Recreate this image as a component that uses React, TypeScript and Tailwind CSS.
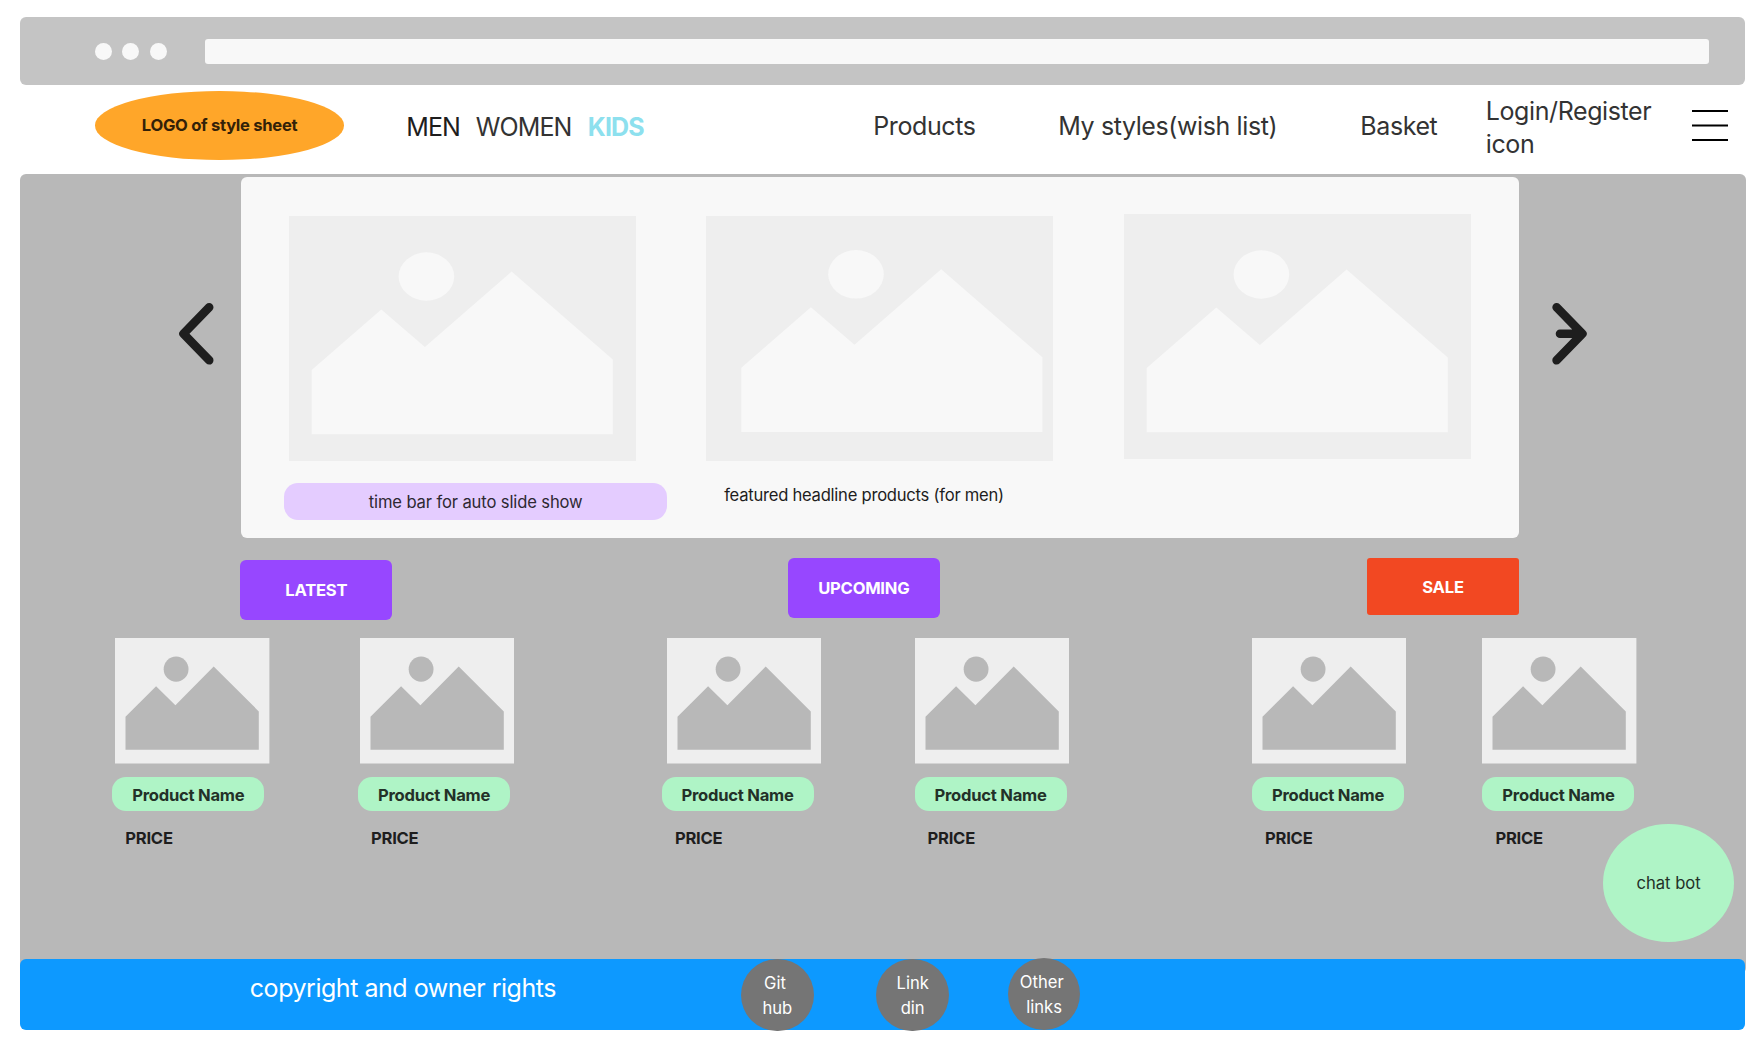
type PictureProps = { className: string; dx?: number; dy?: number };

function HeroPicture({ className, dx = 0, dy = 0 }: PictureProps) {
  return (
    <svg className={className} width="347" height="245" viewBox="0 0 347 245">
      <rect width="347" height="245" fill="#eeeeee" />
      <g transform={`translate(${dx} ${dy})`} fill="#f8f8f8">
        <ellipse cx="137.4" cy="60.5" rx="27.8" ry="24.2" />
        <path d="M22.7 154 92.3 93.5 135.9 131 222.6 55.5 323.8 143.5V218.2H22.7Z" />
      </g>
    </svg>
  );
}

function ProductPicture() {
  return (
    <svg className="shrink-0" width="154.4" height="125.5" viewBox="0 0 154.4 125.5">
      <rect width="154.4" height="125.5" fill="#eeeeee" />
      <g fill="#b8b8b8">
        <ellipse cx="61.1" cy="31.2" rx="12.4" ry="12.6" />
        <path d="M10.5 78.8 41.1 48.3 60.4 67.2 98.7 28.5 143.8 73.4V111.7H10.5Z" />
      </g>
    </svg>
  );
}

function Product({ className, pill, price }: { className: string; pill: string; price: string }) {
  return (
    <article className={`flex w-[154.4px] shrink-0 flex-col items-start font-bold tracking-[-0.25px] ${className}`}>
      <ProductPicture />
      <div className={`mt-[13.5px] flex h-[34px] w-[152px] shrink-0 items-center justify-center rounded-[14px] bg-[#aff4c6] pt-[2px] text-[#233128] ${pill}`}>
        Product Name
      </div>
      <span className={`mt-[14.5px] ${price}`}>PRICE</span>
    </article>
  );
}

function FooterLink({ className, first, second }: { className: string; first: string; second: string }) {
  return (
    <a className={`flex h-[72px] w-[72.6px] shrink-0 flex-col items-center justify-center rounded-full bg-[#757575] pt-[2px] text-white ${className}`}>
      <span className="whitespace-pre">{first}</span>
      <span className="whitespace-pre">{second}</span>
    </a>
  );
}

export default function App() {
  return (
    <div className="flex h-[1048px] w-[1754px] flex-col overflow-hidden bg-white pt-[17px] pl-[20.3px] font-['Inter',sans-serif] text-[16.6px] leading-[25px] whitespace-nowrap text-[#1e1e1e]">
      <div className="flex h-[68px] w-[1725px] shrink-0 items-center rounded-[6px] bg-[#c4c4c4] pl-[75px]">
        <i className="size-[17px] rounded-full bg-[#f8f8f8]" />
        <i className="ml-[10px] size-[17px] rounded-full bg-[#f8f8f8]" />
        <i className="ml-[11px] size-[17px] rounded-full bg-[#f8f8f8]" />
        <div className="ml-[37.8px] h-[25px] w-[1504px] rounded-[3px] bg-[#f8f8f8]" />
      </div>

      <nav className="flex h-[89px] shrink-0 items-start text-[25px] leading-[33px] tracking-[-0.4px] text-[#333333]">
        <div className="mt-[6px] ml-[75px] flex h-[68.5px] w-[248.5px] shrink-0 items-center justify-center rounded-[50%] bg-[#ffa629] pt-[1px] text-[16.6px] font-bold tracking-[-0.3px] text-[#332108]">
          LOGO of style sheet
        </div>
        <a className="mt-[26px] ml-[62.5px] w-[69.5px] shrink-0 tracking-[-0.9px] text-[#1e1e1e]">MEN</a>
        <a className="mt-[26px] w-[112px] shrink-0 tracking-[-0.9px]">WOMEN</a>
        <a className="mt-[26px] w-[285.5px] shrink-0 font-bold tracking-[-0.9px] text-[#8de0ee]">KIDS</a>
        <a className="mt-[25px] w-[185px] shrink-0">Products</a>
        <a className="mt-[25px] w-[302px] shrink-0">My styles(wish list)</a>
        <a className="mt-[25px] w-[125.5px] shrink-0">Basket</a>
        <a className="mt-[10px] w-[206px] shrink-0">
          Login/Register
          <br />
          icon
        </a>
        <svg className="mt-[24px] shrink-0" width="36" height="34" viewBox="0 0 36 34" stroke="#000" strokeWidth="2">
          <path d="M0 2H36M0 16.5H36M0 31H36" />
        </svg>
      </nav>

      <main className="flex h-[800px] w-[1725.7px] shrink-0 flex-col rounded-[6px] bg-[#b8b8b8] pt-[3px]">
        <section className="flex h-[361px] shrink-0">
          <svg className="mt-[125px] ml-[158px] shrink-0" width="36" height="64" viewBox="0 0 36 64" fill="none" stroke="#1e1e1e" strokeWidth="8.6" strokeLinecap="round" strokeLinejoin="round">
            <path d="M31.2 5.3 5.5 31.7 31.2 58.3" />
          </svg>
          <div className="ml-[26.3px] flex h-[361px] w-[1278.2px] shrink-0 flex-col rounded-[6px] bg-[#f8f8f8] pt-[37px] pl-[43.8px]">
            <div className="flex h-[245px] shrink-0 pl-[4.2px]">
              <HeroPicture className="mt-[2px] shrink-0" />
              <HeroPicture className="mt-[2px] ml-[70.5px] shrink-0" dx={12.6} dy={-2.2} />
              <HeroPicture className="ml-[70.8px] shrink-0" />
            </div>
            <div className="mt-[24px] flex items-start">
              <div className="flex h-[37px] w-[382.5px] shrink-0 items-center justify-center rounded-[14px] bg-[#e4ccff] pt-[1px] tracking-[-0.13px] text-[#2e2933]">
                time bar for auto slide show
              </div>
              <span className="ml-[57.3px] tracking-[-0.25px]">featured headline products (for men)</span>
            </div>
          </div>
          <svg className="mt-[125px] ml-[32.4px] shrink-0" width="40" height="64" viewBox="0 0 40 64" fill="none" stroke="#1e1e1e" strokeWidth="8.6" strokeLinecap="round" strokeLinejoin="round">
            <path d="M5.6 5.3 31.4 31.7 5.6 58.3M9 31.7H30" />
          </svg>
        </section>

        <div className="mt-[20px] flex h-[62px] shrink-0 items-start pl-[220px] font-bold tracking-[-0.25px] text-white">
          <button className="mt-[2px] h-[60px] w-[152px] shrink-0 rounded-[6px] bg-[#9747ff]">LATEST</button>
          <button className="ml-[395.5px] h-[60px] w-[152px] shrink-0 rounded-[6px] bg-[#9747ff]">UPCOMING</button>
          <button className="ml-[427.2px] h-[57px] w-[152px] shrink-0 rounded-[3px] bg-[#f24822] pt-[1px]">SALE</button>
        </div>

        <section className="mt-[18.3px] flex shrink-0 pl-[95px]">
          <Product className="" pill="-ml-[3px]" price="ml-[10px]" />
          <Product className="ml-[90.3px]" pill="-ml-[2px]" price="ml-[11px]" />
          <Product className="ml-[152.5px]" pill="-ml-[5.3px]" price="ml-[8px]" />
          <Product className="ml-[93.3px]" pill="" price="ml-[13px]" />
          <Product className="ml-[183.1px]" pill="" price="ml-[13px]" />
          <Product className="ml-[76px]" pill="" price="ml-[13px]" />
        </section>

        <aside className="-mt-[26.5px] ml-[1583px] flex h-[118px] w-[130.5px] shrink-0 items-center justify-center rounded-[50%] bg-[#aff4c6] pt-[1px] text-[#233128]">
          chat bot
        </aside>
      </main>

      <footer className="relative -mt-[15px] flex h-[71px] w-[1725px] shrink-0 items-start rounded-[6px] bg-[#0d99ff]">
        <p className="mt-[13px] ml-[229.5px] w-[491.2px] shrink-0 text-[25px] leading-[33px] tracking-[-0.47px] text-white">copyright and owner rights</p>
        <FooterLink className="" first="Git " second="hub" />
        <FooterLink className="ml-[62.8px]" first="Link" second="din" />
        <FooterLink className="-mt-[1.5px] ml-[58.8px]" first="Other " second="links" />
      </footer>
    </div>
  );
}
